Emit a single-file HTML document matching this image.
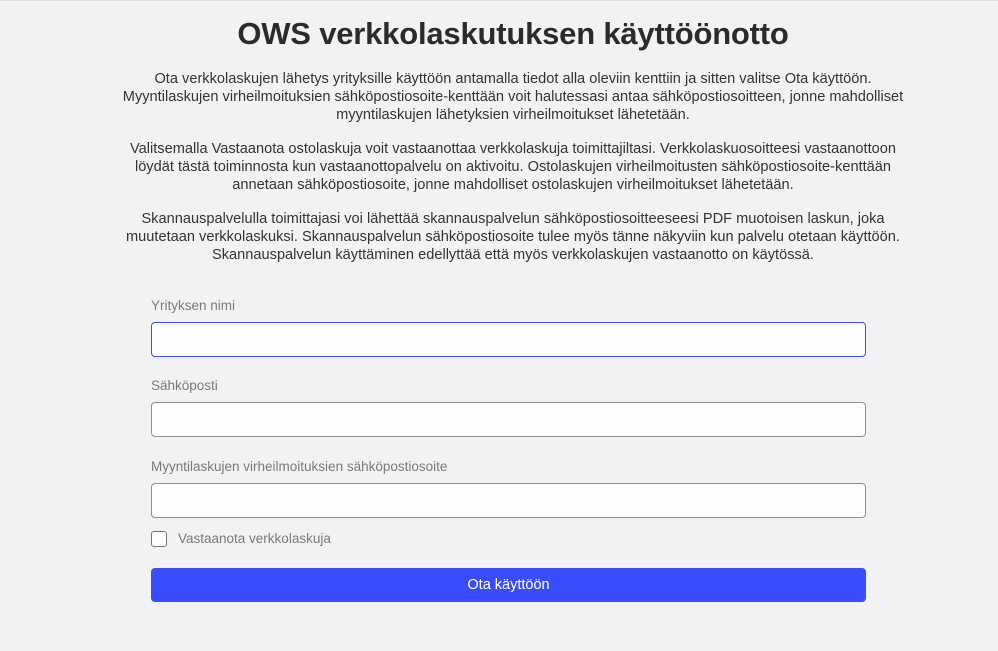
<!DOCTYPE html>
<html><head><meta charset="utf-8">
<style>
html,body{margin:0;padding:0}
body{width:998px;height:651px;background:#f2f2f4;font-family:"Liberation Sans",sans-serif;color:#333;position:relative;overflow:hidden;border-top:1px solid #e0e0e2;box-sizing:border-box}
h1{position:absolute;top:13px;left:0;width:1026px;text-align:center;margin:0;font-size:31px;font-weight:bold;color:#2b2b2b;line-height:40px;letter-spacing:-0.2px}
.p{position:absolute;left:0;width:1026px;text-align:center;font-size:14.6px;line-height:18px;color:#333}
.lbl{position:absolute;left:151px;font-size:13.5px;color:#7a7a7a}
.in{position:absolute;left:151px;width:715px;height:35px;box-sizing:border-box;background:#fdfdfd;border:1px solid #8f8f8f;border-radius:4px}
.in.f{border:1px solid #3d4fe6}
.cb{position:absolute;left:151px;top:530px;width:16px;height:16px;box-sizing:border-box;border:1.5px solid #767676;border-radius:3px;background:#fff}
.btn{position:absolute;left:151px;top:567px;width:715px;height:34px;background:#3a4dfd;border-radius:4px;color:#fff;font-size:14.5px;text-align:center;line-height:34px}
</style></head><body>
<h1>OWS verkkolaskutuksen käyttöönotto</h1>
<div class="p" style="top:69px">Ota verkkolaskujen lähetys yrityksille käyttöön antamalla tiedot alla oleviin kenttiin ja sitten valitse Ota käyttöön.<br>Myyntilaskujen virheilmoituksien sähköpostiosoite-kenttään voit halutessasi antaa sähköpostiosoitteen, jonne mahdolliset<br>myyntilaskujen lähetyksien virheilmoitukset lähetetään.</div>
<div class="p" style="top:139px">Valitsemalla Vastaanota ostolaskuja voit vastaanottaa verkkolaskuja toimittajiltasi. Verkkolaskuosoitteesi vastaanottoon<br>löydät tästä toiminnosta kun vastaanottopalvelu on aktivoitu. Ostolaskujen virheilmoitusten sähköpostiosoite-kenttään<br>annetaan sähköpostiosoite, jonne mahdolliset ostolaskujen virheilmoitukset lähetetään.</div>
<div class="p" style="top:209px">Skannauspalvelulla toimittajasi voi lähettää skannauspalvelun sähköpostiosoitteeseesi PDF muotoisen laskun, joka<br>muutetaan verkkolaskuksi. Skannauspalvelun sähköpostiosoite tulee myös tänne näkyviin kun palvelu otetaan käyttöön.<br>Skannauspalvelun käyttäminen edellyttää että myös verkkolaskujen vastaanotto on käytössä.</div>
<div class="lbl" style="top:297px">Yrityksen nimi</div>
<div class="in f" style="top:321px"></div>
<div class="lbl" style="top:377px">Sähköposti</div>
<div class="in" style="top:401px"></div>
<div class="lbl" style="top:458px">Myyntilaskujen virheilmoituksien sähköpostiosoite</div>
<div class="in" style="top:482px"></div>
<div class="cb"></div>
<div class="lbl" style="left:178px;top:530px;font-size:13.5px">Vastaanota verkkolaskuja</div>
<div class="btn">Ota käyttöön</div>
</body></html>
